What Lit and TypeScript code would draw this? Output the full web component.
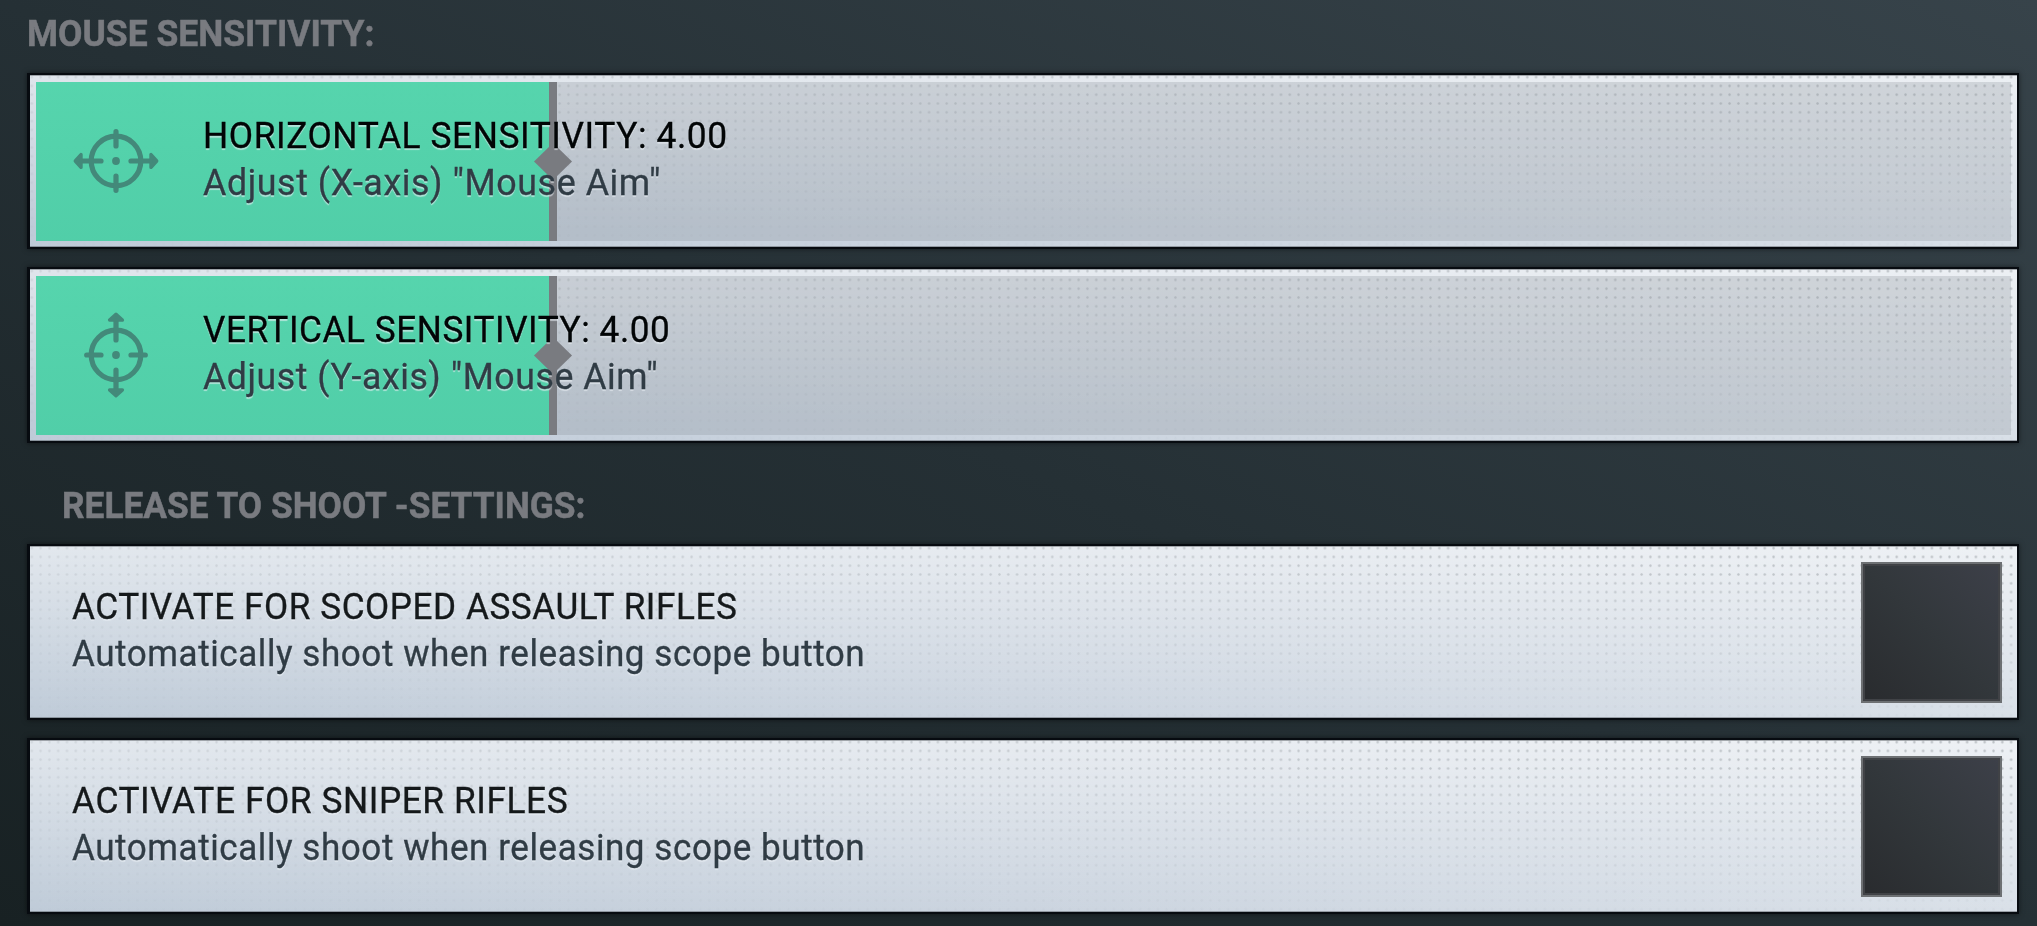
import { LitElement, css, html, svg } from 'lit';
import { customElement, property } from 'lit/decorators.js';

// Text squeezed or stretched to an exact line length
@customElement('fit-text')
export class FitText extends LitElement {
  static styles = css`
    :host {
      display: block;
      white-space: nowrap;
    }
    .text {
      display: inline-block;
      transform-origin: 0 50%;
    }
  `;

  @property() text = '';
  @property({ type: Number }) length = 0;

  render() {
    return html`<span class="text">${this.text}</span>`;
  }

  async updated() {
    await document.fonts.ready;
    const span = this.renderRoot.querySelector('.text') as HTMLElement;
    span.style.transform = `scaleX(${this.length / span.offsetWidth})`;
  }
}

@customElement('aim-icon')
export class AimIcon extends LitElement {
  static styles = css`
    :host {
      display: block;
      width: 86px;
      height: 86px;
    }
    .icon {
      display: block;
      fill: none;
      stroke: #43897a;
      stroke-width: 5.2;
      stroke-linecap: round;
      stroke-linejoin: round;
    }
    .solid {
      fill: #43897a;
      stroke-width: 3.4;
    }
    .dot {
      fill: #43897a;
      stroke: none;
    }
  `;

  @property() axis = 'x';

  render() {
    const turn = this.axis === 'y' ? 'rotate(90 43 43)' : '';
    return html`
      <svg class="icon" width="86" height="86" viewBox="0 0 86 86">
        ${svg`
          <g transform=${turn}>
            <circle cx="43" cy="43" r="24.8" />
            <path d="M43 13.7V28M43 58V72.3M8 43H28M58 43H78" />
            <path class="solid" d="M2.3 43L8 36.6V49.4ZM83.7 43L78 36.6V49.4Z" />
            <circle class="dot" cx="43" cy="43" r="3.9" />
          </g>
        `}
      </svg>
    `;
  }
}

const panelStyles = css`
  :host {
    display: block;
    height: 176px;
  }
  .panel {
    position: relative;
    box-sizing: border-box;
    height: 176px;
    border: 2px solid #070b10;
    border-left-width: 3px;
    background:
      linear-gradient(to bottom, rgba(255, 255, 255, 0.5), rgba(255, 255, 255, 0) 90%),
      linear-gradient(to right, #bfcbd8, #cbd4df 50%, #d9e0e8);
    box-shadow: 0 0 5px rgba(0, 0, 0, 0.5);
  }
  .panel::before {
    content: '';
    position: absolute;
    inset: 0;
    background: radial-gradient(circle, rgba(70, 80, 85, 0.32) 0.8px, transparent 1.6px) -2.6px -2.3px / 8.81px 8.81px;
    mask-image: linear-gradient(to bottom, #000, rgba(0, 0, 0, 0.08)), linear-gradient(to right, rgba(0, 0, 0, 0.35), #000);
    mask-composite: intersect;
  }
  .panel::after {
    content: '';
    position: absolute;
    inset: 0;
    box-shadow: inset 0 1px rgba(60, 65, 70, 0.4), inset 0 -1px rgba(60, 65, 70, 0.4);
  }
  .lines {
    position: relative;
    z-index: 1;
    font-size: 37.5px;
    line-height: 47px;
    letter-spacing: 0.6px;
    text-shadow: 0 2px 1px rgba(235, 240, 245, 0.6);
    -webkit-text-stroke: 0.35px currentColor;
  }
  .title {
    color: #15191b;
  }
  .description {
    color: #303c45;
  }
`;

@customElement('slider-row')
export class SliderRow extends LitElement {
  static styles = [
    panelStyles,
    css`
      .track {
        position: absolute;
        inset: 7px 6px 6px;
        display: flex;
        background: rgba(130, 140, 145, 0.26);
      }
      .fill {
        background: linear-gradient(to bottom, rgba(80, 213, 171, 0.95), rgba(77, 207, 167, 0.96));
      }
      .handle {
        position: relative;
        width: 8px;
        background: #797b80;
      }
      .handle::after {
        content: '';
        position: absolute;
        left: -15px;
        top: 61px;
        width: 38px;
        height: 37px;
        background: #797b80;
        clip-path: polygon(50% 0, 100% 50%, 50% 100%, 0 50%);
      }
      .content {
        display: flex;
        align-items: center;
        height: 172px;
        padding-left: 42.5px;
        gap: 44.5px;
      }
      .icon {
        position: relative;
        z-index: 1;
      }
      .lines {
        padding-bottom: 5px;
      }
      .title {
        color: #020506;
      }
    `,
  ];

  @property() axis = 'x';
  @property() label = '';
  @property() description = '';
  @property({ type: Number }) value = 0;
  @property({ attribute: false }) lengths = [0, 0];

  render() {
    return html`
      <div class="panel">
        <div class="track">
          <div class="fill" style="width: ${this.value * 6.494}%"></div>
          <div class="handle"></div>
        </div>
        <div class="content">
          <aim-icon class="icon" axis=${this.axis}></aim-icon>
          <div class="lines">
            <fit-text class="title" .text="${this.label}: ${this.value.toFixed(2)}" .length=${this.lengths[0]}></fit-text>
            <fit-text class="description" .text=${this.description} .length=${this.lengths[1]}></fit-text>
          </div>
        </div>
      </div>
    `;
  }
}

@customElement('toggle-row')
export class ToggleRow extends LitElement {
  static styles = [
    panelStyles,
    css`
      .panel {
        display: flex;
        align-items: center;
        justify-content: space-between;
        padding: 0 15px 0 42px;
        background:
          linear-gradient(to bottom, rgba(255, 255, 255, 0.55), rgba(255, 255, 255, 0)),
          linear-gradient(to right, #bfcbd8, #cbd4df 50%, #d9e0e8);
      }
      .lines {
        padding-bottom: 4px;
      }
      .box {
        position: relative;
        z-index: 1;
        box-sizing: border-box;
        width: 141px;
        height: 141px;
        border: 2px solid #6d7073;
        background: linear-gradient(to top right, #292b2e, #32373b 50%, #3d4049);
        box-shadow: inset 0 0 0 2px #404246;
      }
    `,
  ];

  @property() label = '';
  @property() description = '';
  @property({ attribute: false }) lengths = [0, 0];

  render() {
    return html`
      <div class="panel">
        <div class="lines">
          <fit-text class="title" .text=${this.label} .length=${this.lengths[0]}></fit-text>
          <fit-text class="description" .text=${this.description} .length=${this.lengths[1]}></fit-text>
        </div>
        <div class="box"></div>
      </div>
    `;
  }
}

@customElement('app-root')
export class AppRoot extends LitElement {
  static styles = css`
    :host {
      display: block;
      box-sizing: border-box;
      width: 100%;
      height: 926px;
      padding: 0 18px 0 27px;
      overflow: hidden;
      background: linear-gradient(to top right, #182123, #253035 50%, #37434a);
      font-family: Roboto, 'Open Sans', sans-serif;
    }
    .heading {
      box-sizing: border-box;
      height: 73px;
      padding-top: 10px;
      color: #797b80;
      font-size: 37.5px;
      font-weight: 700;
      line-height: 47px;
      -webkit-text-stroke: 0.5px currentColor;
    }
    .indented {
      height: 101px;
      padding: 39px 0 0 35px;
    }
    .rows {
      display: flex;
      flex-direction: column;
      gap: 18px;
    }
  `;

  render() {
    return html`
      <div class="heading">
        <fit-text text="MOUSE SENSITIVITY:" length="348"></fit-text>
      </div>
      <div class="rows">
        <slider-row
          axis="x"
          label="HORIZONTAL SENSITIVITY"
          description='Adjust (X-axis) "Mouse Aim"'
          value="4"
          .lengths=${[525, 458]}
        ></slider-row>
        <slider-row
          axis="y"
          label="VERTICAL SENSITIVITY"
          description='Adjust (Y-axis) "Mouse Aim"'
          value="4"
          .lengths=${[467, 455]}
        ></slider-row>
      </div>
      <div class="heading indented">
        <fit-text text="RELEASE TO SHOOT -SETTINGS:" length="524"></fit-text>
      </div>
      <div class="rows">
        <toggle-row
          label="ACTIVATE FOR SCOPED ASSAULT RIFLES"
          description="Automatically shoot when releasing scope button"
          .lengths=${[665, 793]}
        ></toggle-row>
        <toggle-row
          label="ACTIVATE FOR SNIPER RIFLES"
          description="Automatically shoot when releasing scope button"
          .lengths=${[496, 793]}
        ></toggle-row>
      </div>
    `;
  }
}
